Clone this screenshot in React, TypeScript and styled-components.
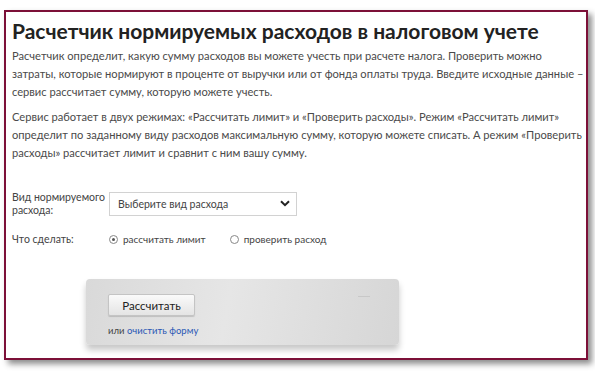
import { createGlobalStyle } from "styled-components";
import styled from "styled-components";

const GlobalStyle = createGlobalStyle`
  html, body {
    margin: 0;
    padding: 0;
    background: #ffffff;
  }
  body {
    font-family: Lato, "Open Sans", sans-serif;
    color: #444;
  }
`;

const Page = styled.div`
  width: 595px;
  height: 371px;
  padding: 10px 0 0 4px;
  box-sizing: border-box;
`;

const Frame = styled.section`
  width: 584px;
  height: 350px;
  box-sizing: border-box;
  border: 2px solid #7c1038;
  background: #fff;
  box-shadow: 4px 4px 6px rgba(0, 0, 0, 0.45);
  padding: 6px 6px 0 6px;
`;

const Title = styled.h1`
  margin: 0;
  font-size: 21px;
  font-weight: 700;
  color: #222;
  line-height: 26px;
  white-space: nowrap;
`;

const Text = styled.p`
  margin: 3px 0 0;
  font-size: 11.15px;
  line-height: 17.8px;
  color: #4a4a4a;
  white-space: nowrap;

  & + & {
    margin-top: 8px;
  }
`;

const Form = styled.div`
  margin-top: 29px;
  display: grid;
  grid-template-columns: 97px 1fr;
  row-gap: 16px;
  align-items: center;
`;

const Label = styled.div`
  font-size: 10.5px;
  line-height: 13px;
  color: #444;
`;

const Select = styled.div`
  width: 188px;
  height: 24px;
  box-sizing: border-box;
  border: 1px solid #d2d2d2;
  display: flex;
  align-items: center;
  justify-content: space-between;
  padding: 0 6px 0 8px;
  font-size: 10.5px;
  color: #444;
`;

const Radios = styled.div`
  display: flex;
  align-items: center;
  gap: 24px;
  font-size: 10px;
  color: #444;
`;

const Radio = styled.label`
  display: flex;
  align-items: center;
  gap: 5px;
`;

const Dot = styled.span<{ $on?: boolean }>`
  width: 9px;
  height: 9px;
  box-sizing: border-box;
  border-radius: 50%;
  border: 1px solid #888;
  background: #fff;
  display: flex;
  align-items: center;
  justify-content: center;

  &::after {
    content: "";
    width: 3px;
    height: 3px;
    border-radius: 50%;
    background: ${(p) => (p.$on ? "#555" : "transparent")};
  }
`;

const Panel = styled.div`
  position: relative;
  margin: 33px 0 0 74px;
  width: 313px;
  height: 66px;
  box-sizing: border-box;
  border-radius: 4px;
  background: linear-gradient(100deg, #d9d9d9 0%, #e6e6e6 45%, #d6d6d6 100%);
  box-shadow: 0 5px 6px rgba(0, 0, 0, 0.22);
  padding: 15px 0 0 22px;
`;

const Dash = styled.span`
  position: absolute;
  top: 17px;
  right: 29px;
  width: 12px;
  height: 1px;
  background: #c8c8c8;
`;

const Button = styled.button`
  width: 87px;
  height: 22px;
  border: 1px solid #c4c4c4;
  border-radius: 2px;
  background: linear-gradient(#fafafa, #e4e4e4);
  box-shadow: 0 1px 1px rgba(0, 0, 0, 0.15);
  font-family: inherit;
  font-size: 11.5px;
  color: #222;
  padding: 0;
`;

const Alt = styled.div`
  margin-top: 9px;
  font-size: 9.5px;
  color: #444;

  a {
    color: #2a58b5;
    text-decoration: none;
  }
`;

export default function App() {
  return (
    <>
      <GlobalStyle />
      <Page>
        <Frame>
          <Title>Расчетчик нормируемых расходов в налоговом учете</Title>
          <Text>
            Расчетчик определит, какую сумму расходов вы можете учесть при расчете налога. Проверить можно
            <br />
            затраты, которые нормируют в проценте от выручки или от фонда оплаты труда. Введите исходные данные –
            <br />
            сервис рассчитает сумму, которую можете учесть.
          </Text>
          <Text>
            Сервис работает в двух режимах: «Рассчитать лимит» и «Проверить расходы». Режим «Рассчитать лимит»
            <br />
            определит по заданному виду расходов максимальную сумму, которую можете списать. А режим «Проверить
            <br />
            расходы» рассчитает лимит и сравнит с ним вашу сумму.
          </Text>
          <Form>
            <Label>
              Вид нормируемого
              <br />
              расхода:
            </Label>
            <Select>
              <span>Выберите вид расхода</span>
              <svg width="10" height="7" viewBox="0 0 10 7">
                <path d="M1 1.2 L5 5.2 L9 1.2" fill="none" stroke="#222" strokeWidth="2" />
              </svg>
            </Select>
            <Label>Что сделать:</Label>
            <Radios>
              <Radio>
                <Dot $on />
                рассчитать лимит
              </Radio>
              <Radio>
                <Dot />
                проверить расход
              </Radio>
            </Radios>
          </Form>
          <Panel>
            <Dash />
            <Button>Рассчитать</Button>
            <Alt>
              или <a href="#">очистить форму</a>
            </Alt>
          </Panel>
        </Frame>
      </Page>
    </>
  );
}
